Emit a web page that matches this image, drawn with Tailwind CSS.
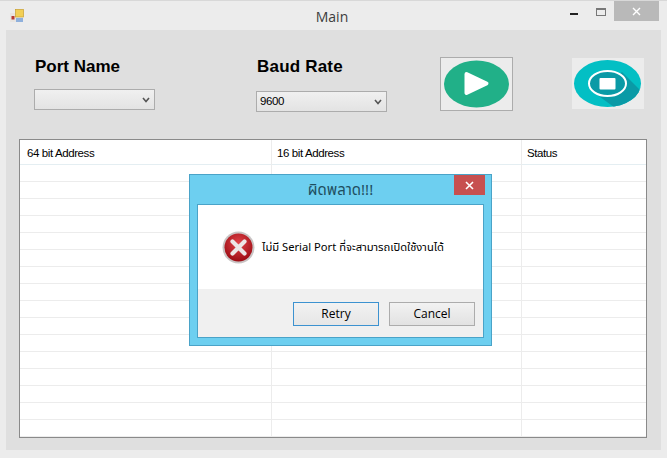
<!DOCTYPE html>
<html lang="th">
<head>
  <meta charset="UTF-8">
  <meta name="viewport" content="width=device-width, initial-scale=1.0">
  <title>Main</title>
  <script src="https://cdn.jsdelivr.net/npm/@tailwindcss/browser@4"></script>
</head>
<body class="bg-[#ececec] overflow-hidden">
  <div class="relative w-[667px] h-[458px] bg-[#ececec] border-t border-[#d8d8d8] font-['Liberation_Sans','Noto_Sans',sans-serif] text-black">

    <!-- title bar -->
    <div class="relative flex items-center justify-center h-[29px] text-[14px] text-[#3c3c3c] font-['Open_Sans',sans-serif]">
      <svg class="absolute left-[10px] top-[8px]" width="14" height="14" viewBox="0 0 14 14">
        <rect x="0" y="4" width="6" height="9" fill="#e8e4e0"/>
        <rect x="1.5" y="7" width="3" height="3.5" fill="#b83a32"/>
        <rect x="5.5" y="0.5" width="8" height="7.5" fill="#f2cf55" stroke="#c9a030" stroke-width="0.7"/>
        <rect x="6" y="9" width="7" height="4" fill="#8fb0dc"/>
      </svg>
      <span class="pt-px pr-[3px]">Main</span>
      <div class="absolute right-[8px] top-0 flex items-start">
        <div class="w-[8px] h-[2px] bg-[#222] mt-[12px] mr-[18px]"></div>
        <div class="w-[10px] h-[8px] border border-[#777] border-t-2 mt-[7px] mr-[8px]"></div>
        <div class="flex items-center justify-center w-[45px] h-[20px] bg-[#b9b9b9]">
          <svg width="9" height="9" viewBox="0 0 9 9"><path d="M1 1l7 7M8 1l-7 7" stroke="#fff" stroke-width="1.4"/></svg>
        </div>
      </div>
    </div>

    <!-- client area -->
    <div class="mx-[6px] h-[420px] bg-[#dfdfdf] pl-[13px] pr-[14px] flex flex-col">
      <div class="flex h-[109px] pt-[27px] pl-[15px]">
        <div class="w-[222px] flex flex-col">
          <div class="pl-px text-[17px] leading-[20px] font-bold">Port Name</div>
          <div class="mt-[12px] w-[121px] h-[21px] flex items-center justify-end pr-[4px] border border-[#acacac] bg-gradient-to-b from-[#f0f0f0] to-[#e3e3e3]">
            <svg width="8" height="6" viewBox="0 0 8 6"><path d="M1 1l3 3.5L7 1" fill="none" stroke="#555" stroke-width="1.6"/></svg>
          </div>
        </div>
        <div class="w-[184px] flex flex-col">
          <div class="pl-px text-[17px] leading-[20px] font-bold tracking-[0.2px]">Baud Rate</div>
          <div class="mt-[14px] w-[131px] h-[21px] flex items-center justify-between pl-[3px] pr-[4px] border border-[#acacac] bg-gradient-to-b from-[#f0f0f0] to-[#e3e3e3] text-[11.5px] tracking-[-0.4px]">
            <span>9600</span>
            <svg width="8" height="6" viewBox="0 0 8 6"><path d="M1 1l3 3.5L7 1" fill="none" stroke="#555" stroke-width="1.6"/></svg>
          </div>
        </div>
        <div class="w-[132px]">
          <div class="w-[73px] h-[54px] border border-[#acacac] bg-[#ececec] flex items-center justify-center">
            <svg width="67" height="48" viewBox="0 0 67 48">
              <ellipse cx="33.5" cy="24" rx="32.5" ry="23.5" fill="#21b088"/>
              <path d="M26 14.5 L46 24 L26 33.5 Z" transform="translate(-2.5 -0.5)" fill="#fff" stroke="#fff" stroke-width="4" stroke-linejoin="round"/>
            </svg>
          </div>
        </div>
        <div class="w-[72px] h-[51px] mt-px bg-[#ececec] flex items-center justify-center">
          <svg width="72" height="51" viewBox="0 0 72 51">
            <defs><clipPath id="stopClip"><ellipse cx="35.5" cy="25.5" rx="33.5" ry="23.5"/></clipPath></defs>
            <ellipse cx="35.5" cy="25.5" rx="33.5" ry="23.5" fill="#03bfc4"/>
            <path d="M50 14 L72 36 L72 52 L46 52 L24 36 Z" fill="#0a9aa6" clip-path="url(#stopClip)"/>
            <ellipse cx="35.5" cy="25.5" rx="18.5" ry="12.5" fill="#0a9aa6" stroke="#fff" stroke-width="2"/>
            <rect x="27.5" y="20" width="16" height="11.5" rx="1" fill="#fff"/>
          </svg>
        </div>
      </div>

      <!-- device table -->
      <div class="h-[299px] bg-white border border-[#8a8a8a] text-[11.5px] tracking-[-0.4px] grid grid-cols-[252px_250px_1fr] overflow-hidden">
        <div class="border-r border-[#ececec]">
          <div class="h-[25px] pl-[7px] pt-[3px] flex items-center border-b border-[#e4eef2]">64 bit Address</div>
          <div class="h-[272px] bg-[repeating-linear-gradient(to_bottom,#fff_0,#fff_16px,#ececec_16px,#ececec_17px)]"></div>
        </div>
        <div class="border-r border-[#ececec]">
          <div class="h-[25px] pl-[5px] pt-[3px] flex items-center border-b border-[#e4eef2]">16 bit Address</div>
          <div class="h-[272px] bg-[repeating-linear-gradient(to_bottom,#fff_0,#fff_16px,#ececec_16px,#ececec_17px)]"></div>
        </div>
        <div>
          <div class="h-[25px] pl-[5px] pt-[3px] flex items-center border-b border-[#e4eef2]">Status</div>
          <div class="h-[272px] bg-[repeating-linear-gradient(to_bottom,#fff_0,#fff_16px,#ececec_16px,#ececec_17px)]"></div>
        </div>
      </div>
    </div>

    <!-- error dialog -->
    <div class="absolute left-[189px] top-[173px] w-[303px] h-[172px] bg-[#6dcff0] border border-[#4aa3c8] px-[7px] pb-[7px] flex flex-col">
      <div class="relative h-[29px] flex items-center justify-center text-[15px] text-[#1f4e5f] font-['Noto_Sans','Noto_Sans_Thai','DejaVu_Sans',sans-serif]">
        ผิดพลาด!!!
        <div class="absolute right-[-1px] top-0 w-[31px] h-[20px] bg-[#c75050] flex items-center justify-center">
          <svg width="9" height="9" viewBox="0 0 9 9"><path d="M1 1l7 7M8 1l-7 7" stroke="#fff" stroke-width="1.6"/></svg>
        </div>
      </div>
      <div class="flex-1 flex flex-col border border-[#4aa3c8] bg-white">
        <div class="h-[84px] flex items-center pl-[24px] gap-[7px] text-[11.2px] font-['Noto_Sans','Noto_Sans_Thai','DejaVu_Sans',sans-serif]">
          <svg class="shrink-0" width="33" height="33" viewBox="0 0 33 33">
            <defs>
              <radialGradient id="errFill" cx="50%" cy="35%" r="65%">
                <stop offset="0" stop-color="#e2444a"/>
                <stop offset="1" stop-color="#9c0c14"/>
              </radialGradient>
            </defs>
            <circle cx="16.5" cy="16.5" r="16" fill="#c9c4c4"/>
            <circle cx="16.5" cy="16.5" r="14" fill="url(#errFill)"/>
            <path d="M10.5 10.5l12 12M22.5 10.5l-12 12" stroke="#ece6e6" stroke-width="4.2" stroke-linecap="round"/>
          </svg>
          <span>ไม่มี Serial Port ที่จะสามารถเปิดใช้งานได้</span>
        </div>
        <div class="flex-1 bg-[#f0f0f0] flex justify-end items-start pt-[13px] pr-[8px] gap-[10px] text-[12px] font-['Open_Sans',sans-serif]">
          <div class="w-[86px] h-[24px] flex items-center justify-center border border-[#3c92d0] bg-gradient-to-b from-[#f2f2f2] to-[#e6e6e6]">Retry</div>
          <div class="w-[86px] h-[24px] flex items-center justify-center border border-[#acacac] bg-gradient-to-b from-[#f2f2f2] to-[#e2e2e2]">Cancel</div>
        </div>
      </div>
    </div>
  </div>
</body>
</html>
